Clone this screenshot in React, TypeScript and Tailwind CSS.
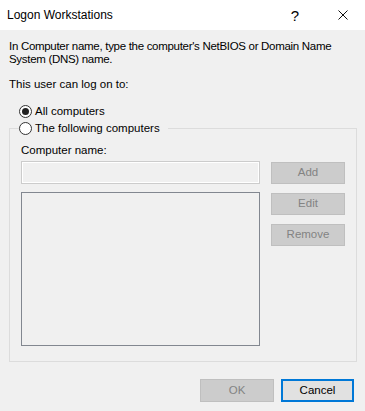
import React from 'react';

const font = { fontFamily: '"Liberation Sans", Arial, sans-serif' };

function Radio({ checked, label }: { checked?: boolean; label: string }) {
  return (
    <div className="flex items-center h-[13px]">
      <span className="w-[13px] h-[13px] rounded-full border border-[#333333] bg-white flex items-center justify-center">
        {checked && <span className="w-[7px] h-[7px] rounded-full bg-[#222222]" />}
      </span>
      <span className="ml-[3px] leading-[13px]">{label}</span>
    </div>
  );
}

function SideButton({ label }: { label: string }) {
  return (
    <div className="w-[74px] h-[22px] bg-[#cccccc] border border-[#bfbfbf] text-[#838383] flex items-center justify-center">
      {label}
    </div>
  );
}

export default function App() {
  return (
    <div className="w-[365px] h-[411px] bg-[#f0f0f0] flex flex-col text-[11.5px] text-black whitespace-nowrap" style={font}>
      {/* Title bar */}
      <div className="h-[30px] bg-white flex items-center pl-[7px] shrink-0">
        <span className="flex-1 leading-[13px] text-[12px]">Logon Workstations</span>
        <span className="text-[15px] w-[12px] text-center mr-[37px] leading-none">?</span>
        <svg width="10" height="10" viewBox="0 0 10 10" className="mr-[17px]">
          <path d="M0.5 0.5 L9.5 9.5 M9.5 0.5 L0.5 9.5" stroke="#111" strokeWidth="1" />
        </svg>
      </div>

      {/* Body */}
      <div className="flex-1 flex flex-col pl-[9px] pr-[8px] pt-[10px]">
        <p className="leading-[13px] tracking-[-0.3px]">
          In Computer name, type the computer's NetBIOS or Domain Name
          <br />
          System (DNS) name.
        </p>
        <p className="leading-[13px] mt-[12px]">This user can log on to:</p>

        <div className="ml-[10px] mt-[14px]">
          <Radio checked label="All computers" />
        </div>

        <fieldset className="mt-[4px] border border-[#dcdcdc] h-[240px] pl-[11px] pr-[11px]">
          <legend className="ml-[-2px] pr-[8px]">
            <Radio label="The following computers" />
          </legend>
          <p className="leading-[13px] mt-[9px]">Computer name:</p>
          <div className="flex gap-[11px] mt-[4px]">
            <div className="flex flex-col flex-1">
              <div className="h-[23px] border border-[#cccccc] shadow-[inset_0_0_0_1px_#ffffff] bg-[#f0f0f0]" />
              <div className="h-[154px] mt-[8px] border border-[#828790] bg-[#f0f0f0]" />
            </div>
            <div className="flex flex-col pt-[1px] gap-[9px]">
              <SideButton label="Add" />
              <SideButton label="Edit" />
              <SideButton label="Remove" />
            </div>
          </div>
        </fieldset>

        <div className="flex justify-end gap-[7px] mt-[17px] pr-[3px]">
          <div className="w-[74px] h-[23px] bg-[#cccccc] border border-[#bfbfbf] text-[#838383] flex items-center justify-center">
            OK
          </div>
          <div className="w-[73px] h-[23px] bg-[#e1e1e1] border-2 border-[#0078d7] flex items-center justify-center">
            Cancel
          </div>
        </div>
      </div>
    </div>
  );
}
